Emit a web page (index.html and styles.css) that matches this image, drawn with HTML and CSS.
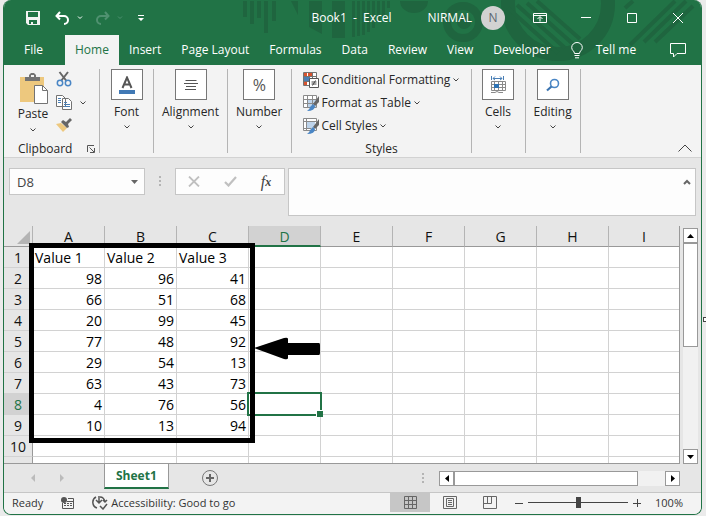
FILE: index.html
```html
<!DOCTYPE html>
<html lang="en">
<head>
    <meta charset="UTF-8">
    <title>Book1 - Excel</title>
    <link rel="stylesheet" href="styles.css">
</head>
<body>
    <div class="window">
        <header class="top">
            <svg class="pattern" width="460" height="65" viewBox="240 0 460 65">
                <path d="M243 1h4v16h-4zM250 1h4v23h-4zM257 1h4v17h-4zM264 1h4v32h-4zM272 1h4v20h-4zM291 1h7v14zM309 1h13v33l-13-7zM332 1h13v37h-13zM352 1h3v36h-3zM357 1h3v35h-3zM362 1h3v34h-3zM367 1h3v31h-3zM372 1h3v27h-3zM377 1h3v21h-3zM382 1h3v15h-3zM387 1h3v7h-3zM400 1h28a14 12 0 0 1-28 0z"/>
                <circle class="ring" cx="463" cy="22" r="16" stroke-width="8"/>
                <circle cx="464" cy="22" r="7"/>
                <circle class="ring" cx="558" cy="4" r="50" stroke-width="14"/>
                <path class="ring" d="M508 8l50 45M517 5l48 43M527 3l46 41M537 1l43 38M630 45l45-44M644 42l42-41M625 8l8-7M655 42l38-36" stroke-width="4"/>
            </svg>
            <div class="titlebar">
                <button class="quick save" aria-label="Save">
                    <svg width="14" height="14" viewBox="0 0 14 14"><path fill="#f3f3f3" fill-rule="evenodd" d="M0 0h14v14H2l-2-2zM2 1v5h10V1zM3 9v4h2v-2h2v2h4V9z"/></svg>
                </button>
                <button class="quick undo" aria-label="Undo">
                    <svg width="15" height="14" viewBox="0 0 15 14"><path class="white thick" d="M5 1L1.500 5L5 8.500M2 5h7a4 4 0 0 1 0 8"/></svg>
                </button>
                <button class="quick arrow" aria-label="Undo list"><svg width="6" height="4" viewBox="0 0 6 4"><path class="white" d="M1 .5l2 2l2-2"/></svg></button>
                <button class="quick redo" aria-label="Redo">
                    <svg width="15" height="14" viewBox="0 0 15 14"><path class="faded thick" d="M10 1l3.500 4L10 8.500M13 5H6a4 4 0 0 0 0 8"/></svg>
                </button>
                <button class="quick arrow" aria-label="Redo list"><svg width="6" height="4" viewBox="0 0 6 4"><path class="faded" d="M1 .5l2 2l2-2"/></svg></button>
                <button class="quick custom" aria-label="Customize toolbar">
                    <svg width="6" height="6" viewBox="0 0 6 6"><path fill="#fff" d="M0 0h6v1H0zM0 3h6L3 6z"/></svg>
                </button>
                <span class="book">Book1&nbsp; -&nbsp; Excel</span>
                <span class="user">NIRMAL</span>
                <span class="avatar">N</span>
                <button class="win" aria-label="Ribbon display options"><svg width="14" height="12" viewBox="0 0 14 12"><path class="white" d="M.5 1.500h13v9H.5zM.5 3.500h13M7 9.500V5M4.500 7L7 4.500L9.500 7"/></svg></button>
                <button class="win" aria-label="Minimize"><svg width="10" height="12" viewBox="0 0 10 12"><path class="white" d="M0 5.500h10"/></svg></button>
                <button class="win" aria-label="Maximize"><svg width="10" height="12" viewBox="0 0 10 12"><path class="white" d="M.5 1.500h9v9h-9z"/></svg></button>
                <button class="win" aria-label="Close"><svg width="10" height="12" viewBox="0 0 10 12"><path class="white" d="M0 1l10 10M10 1L0 11"/></svg></button>
            </div>
            <nav class="tabs">
                <button class="file">File</button>
                <button class="active">Home</button>
                <button>Insert</button>
                <button>Page Layout</button>
                <button>Formulas</button>
                <button>Data</button>
                <button>Review</button>
                <button>View</button>
                <button>Developer</button>
                <button class="tell">
                    <svg width="12" height="17" viewBox="0 0 12 17"><path class="white" d="M3.500 11.500C3.500 9 .7 8.500.7 5.500a5.300 5 0 0 1 10.600 0C11.300 8.500 8.500 9 8.500 11.500zM3.500 13.500h5M4 15.800h4"/></svg>
                    Tell me
                </button>
                <button class="comment" aria-label="Comments"><svg width="16" height="15" viewBox="0 0 16 15"><path class="white" d="M.5.5h15v10H7l-3.500 3.500v-3.500h-3z"/></svg></button>
            </nav>
        </header>

        <section class="ribbon">
            <div class="group clipboard">
                <div class="tools">
                    <button class="paste">
                        <svg width="29" height="31" viewBox="0 0 29 31">
                            <path fill="#edc87e" d="M1 4h24v25H1z"/>
                            <path fill="#737373" d="M6 8V4h4V2l2-2h3l2 2v2h4v4zM12 2v2h3V2z" fill-rule="evenodd"/>
                            <path fill="#fff" stroke="#737373" d="M15.500 12.500h8l5 5v13h-13z"/>
                            <path fill="none" stroke="#737373" d="M23.500 12.500v5h5"/>
                        </svg>
                        <span>Paste</span>
                        <svg class="down" width="6" height="4" viewBox="0 0 6 4"><path d="M.5.5L3 3L5.500.5"/></svg>
                    </button>
                    <div class="small">
                        <button aria-label="Cut"><svg width="16" height="16" viewBox="0 0 16 16"><path fill="none" stroke="#666" stroke-width="2" d="M3.500 1l7 9M12 1L5 10"/><g fill="none" stroke="#4a86c5" stroke-width="1.500"><circle cx="4" cy="12" r="2.700"/><circle cx="12" cy="12" r="2.700"/></g></svg></button>
                        <button aria-label="Copy"><svg width="16" height="15" viewBox="0 0 16 15"><path fill="#fff" stroke="#737373" d="M.5.5h6l3 3v8h-9zM6.500 3.500h6l3 3v8h-9z"/><path fill="none" stroke="#4a7fb5" d="M2 3.500h3M2 5.500h3M2 7.500h3M8 7.500h3M8 9.500h6M8 11.500h6"/></svg><svg class="down" width="6" height="4" viewBox="0 0 6 4"><path d="M.5.5L3 3L5.500.5"/></svg></button>
                        <button aria-label="Format Painter"><svg width="16" height="14" viewBox="0 0 16 14"><path fill="#edc87e" d="M0 6l5-1l6 5l-4 4z"/><path fill="#666" d="M5 4l2-2l3 2l4-4l2 2l-4 4l1 3l-2 1z"/></svg></button>
                    </div>
                </div>
                <div class="caption">Clipboard<button class="launch" aria-label="Clipboard settings"><svg width="8" height="8" viewBox="0 0 8 8"><path fill="none" stroke="#555" d="M.5 7V.5H7M2.500 2.500l4.500 4.500M7.500 3v4.500H3"/></svg></button></div>
            </div>
            <div class="group">
                <button class="big"><span class="box"><svg width="16" height="18" viewBox="0 0 16 18"><path fill="none" stroke="#555" stroke-width="2" d="M3.500 12L8 1.500L12.500 12M5 8.500h6"/><path fill="#4179b5" d="M0 14h16v4H0z"/></svg></span>Font<svg class="down" width="6" height="4" viewBox="0 0 6 4"><path d="M.5.5L3 3L5.500.5"/></svg></button>
            </div>
            <div class="group">
                <button class="big"><span class="box"><svg width="14" height="12" viewBox="0 0 14 12"><path fill="none" stroke="#555" d="M1.500 1.500h11M0 4.500h14M2 7.500h10M1 10.500h11"/></svg></span>Alignment<svg class="down" width="6" height="4" viewBox="0 0 6 4"><path d="M.5.5L3 3L5.500.5"/></svg></button>
            </div>
            <div class="group">
                <button class="big"><span class="box percent">%</span>Number<svg class="down" width="6" height="4" viewBox="0 0 6 4"><path d="M.5.5L3 3L5.500.5"/></svg></button>
            </div>
            <div class="group styles">
                <div class="list">
                    <button><svg width="16" height="16" viewBox="0 0 16 16"><path fill="#fff" stroke="#737373" d="M.5.500h13v13H.5zM.5 4.500h13M.5 9.500h13M9.500.5v13"/><path fill="#d8532f" d="M1 1h3v3H1zM5 1h4v3H5zM1 10h3v3H1z"/><path fill="#4a7fb5" d="M1 5h6v4H1z"/><path fill="#fff" stroke="#555" d="M6.500 6.500h9v9h-9z"/><path fill="none" stroke="#444" d="M8.500 10h5M8.500 12h5M12.500 8.500l-3 5"/></svg>Conditional Formatting<svg class="down" width="6" height="4" viewBox="0 0 6 4"><path d="M.5.5L3 3L5.500.5"/></svg></button>
                    <button><svg width="16" height="16" viewBox="0 0 16 16"><path fill="#fff" stroke="#8a8a8a" d="M.5.500h13v12H.5z"/><path fill="#bdd3ea" d="M5 4h8v8H5z"/><path fill="none" stroke="#8a8a8a" d="M.5 4.500h13M.5 8.500h13M4.500.5v12M9.500.5v12"/><path fill="#666" d="M16 1v6l-4 4l-2-2z"/><path fill="#4a86c5" d="M10 9l2 2q0 5-8 5q3-2 3-4z"/></svg>Format as Table<svg class="down" width="6" height="4" viewBox="0 0 6 4"><path d="M.5.5L3 3L5.500.5"/></svg></button>
                    <button><svg width="16" height="16" viewBox="0 0 16 16"><path fill="#fff" stroke="#8a8a8a" d="M.5.500h13v12H.5z"/><path fill="#bdd3ea" d="M3 4h9v6H3z"/><path fill="none" stroke="#8a8a8a" d="M.5 3.500h13M.5 10.500h8M3.500.5v12"/><path fill="#666" d="M16 1v6l-4 4l-2-2z"/><path fill="#4a86c5" d="M10 9l2 2q0 5-8 5q3-2 3-4z"/></svg>Cell Styles<svg class="down" width="6" height="4" viewBox="0 0 6 4"><path d="M.5.5L3 3L5.500.5"/></svg></button>
                </div>
                <div class="caption">Styles</div>
            </div>
            <div class="group">
                <button class="big"><span class="box"><svg width="16" height="17" viewBox="0 0 16 17"><path fill="none" stroke="#4a7fb5" d="M1.500 0v4M13.500 0v4M3 2.500h9M5 .5l-2 2l2 1.500M10 .5l2 2l-2 1.500"/><path fill="#fff" stroke="#8a8a8a" d="M1.500 5.500h14v9h-14zM1.500 8.500h14M1.500 11.500h14M4.500 5.500v9M8.500 5.500v9M12.500 5.500v9M1 16.500h4l2-1l2 1h4"/><path fill="#2f74b5" d="M4 8h5v4H4z"/></svg></span>Cells<svg class="down" width="6" height="4" viewBox="0 0 6 4"><path d="M.5.5L3 3L5.500.5"/></svg></button>
            </div>
            <div class="group">
                <button class="big"><span class="box"><svg width="14" height="14" viewBox="0 0 14 14"><circle fill="none" stroke="#4a86c5" stroke-width="1.600" cx="8.500" cy="5.500" r="4"/><path stroke="#3b74b0" stroke-width="2.200" d="M5.500 8.500L1 12.500"/></svg></span>Editing<svg class="down" width="6" height="4" viewBox="0 0 6 4"><path d="M.5.5L3 3L5.500.5"/></svg></button>
            </div>
            <button class="collapse" aria-label="Collapse ribbon"><svg width="14" height="8" viewBox="0 0 14 8"><path fill="none" stroke="#444" d="M.5 7.500L7 1l6.500 6.500"/></svg></button>
        </section>

        <section class="formula">
            <div class="name">
                <input type="text" value="D8" aria-label="Name box">
                <button aria-label="Names"><svg width="7" height="4" viewBox="0 0 7 4"><path fill="#666" d="M0 0h7L3.500 4z"/></svg></button>
            </div>
            <span class="dots"></span>
            <div class="fx">
                <button aria-label="Cancel"><svg width="12" height="11" viewBox="0 0 12 11"><path fill="none" stroke="#c0c0c0" stroke-width="1.800" d="M1 .5l10 10M11 .5L1 10.500"/></svg></button>
                <button aria-label="Enter"><svg width="13" height="11" viewBox="0 0 13 11"><path fill="none" stroke="#c0c0c0" stroke-width="2.200" d="M1 6l3.500 3.500L12 1"/></svg></button>
                <button class="fn" aria-label="Insert function">f<sub>x</sub></button>
            </div>
            <div class="entry">
                <textarea aria-label="Formula bar"></textarea>
                <button aria-label="Collapse formula bar"><svg width="8" height="6" viewBox="0 0 8 6"><path fill="none" stroke="#666" stroke-width="2" d="M1 5l3-3l3 3"/></svg></button>
            </div>
        </section>

        <main class="sheet">
            <div class="grid">
                <table>
                    <colgroup><col class="num"><col><col><col><col><col><col><col><col><col class="last"></colgroup>
                    <thead>
                        <tr><th class="corner"><svg width="13" height="13" viewBox="0 0 13 13"><path fill="#b4b4b4" d="M13 0v13H0z"/></svg></th><th>A</th><th>B</th><th>C</th><th class="on">D</th><th>E</th><th>F</th><th>G</th><th>H</th><th>I</th></tr>
                    </thead>
                    <tbody>
                        <tr><th>1</th><td class="text">Value 1</td><td class="text">Value 2</td><td class="text">Value 3</td><td></td><td></td><td></td><td></td><td></td><td></td></tr>
                        <tr><th>2</th><td>98</td><td>96</td><td>41</td><td></td><td></td><td></td><td></td><td></td><td></td></tr>
                        <tr><th>3</th><td>66</td><td>51</td><td>68</td><td></td><td></td><td></td><td></td><td></td><td></td></tr>
                        <tr><th>4</th><td>20</td><td>99</td><td>45</td><td></td><td></td><td></td><td></td><td></td><td></td></tr>
                        <tr><th>5</th><td>77</td><td>48</td><td>92</td><td></td><td></td><td></td><td></td><td></td><td></td></tr>
                        <tr><th>6</th><td>29</td><td>54</td><td>13</td><td></td><td></td><td></td><td></td><td></td><td></td></tr>
                        <tr><th>7</th><td>63</td><td>43</td><td>73</td><td></td><td></td><td></td><td></td><td></td><td></td></tr>
                        <tr><th class="on">8</th><td>4</td><td>76</td><td>56</td><td class="selected"></td><td></td><td></td><td></td><td></td><td></td></tr>
                        <tr><th>9</th><td>10</td><td>13</td><td>94</td><td></td><td></td><td></td><td></td><td></td><td></td></tr>
                        <tr><th>10</th><td></td><td></td><td></td><td></td><td></td><td></td><td></td><td></td><td></td></tr>
                        <tr class="cut"><th></th><td></td><td></td><td></td><td></td><td></td><td></td><td></td><td></td><td></td></tr>
                    </tbody>
                </table>
                <div class="frame"></div>
                <svg class="pointer" width="68" height="24" viewBox="0 0 68 24"><path d="M1 11L31 1q4-1 4 1v4h31q1 0 1 2v8q0 2-1 2H35v3q0 2-4 1z"/></svg>
            </div>
            <div class="vscroll">
                <button aria-label="Scroll up"><svg width="7" height="4" viewBox="0 0 7 4"><path d="M0 4h7L3.500 0z"/></svg></button>
                <span class="thumb"></span>
                <button aria-label="Scroll down"><svg width="7" height="4" viewBox="0 0 7 4"><path d="M0 0h7L3.500 4z"/></svg></button>
            </div>
        </main>

        <div class="sheetbar">
            <button class="step" aria-label="Previous sheet"><svg width="4" height="8" viewBox="0 0 4 8"><path fill="#bbb" d="M4 0v8L0 4z"/></svg></button>
            <button class="step" aria-label="Next sheet"><svg width="4" height="8" viewBox="0 0 4 8"><path fill="#bbb" d="M0 0v8l4-4z"/></svg></button>
            <button class="sheettab">Sheet1</button>
            <button class="add" aria-label="New sheet"><svg width="16" height="16" viewBox="0 0 16 16"><circle fill="none" stroke="#777" cx="8" cy="8" r="7.500"/><path stroke="#666" stroke-width="2" d="M4 8h8M8 4v8"/></svg></button>
            <span class="dots"></span>
            <div class="hscroll">
                <button aria-label="Scroll left"><svg width="4" height="7" viewBox="0 0 4 7"><path d="M4 0v7L0 3.500z"/></svg></button>
                <span class="thumb"></span>
                <button aria-label="Scroll right"><svg width="4" height="7" viewBox="0 0 4 7"><path d="M0 0v7l4-3.500z"/></svg></button>
            </div>
        </div>

        <footer class="status">
            <span class="ready">Ready</span>
            <svg class="macro" width="13" height="12" viewBox="0 0 13 12"><path fill="none" stroke="#555" d="M1.500 6v5.500h11v-10H7M6 4.500h6"/><path fill="#555" d="M3 6h2v1H3zM6 6h2v1H6zM9 6h2v1H9zM3 8h2v1H3zM6 8h2v1H6zM9 8h2v1H9z"/><circle fill="#555" cx="3" cy="3" r="3"/></svg>
            <svg class="access" width="16" height="14" viewBox="0 0 16 14"><path fill="none" stroke="#555" stroke-width="1.500" d="M4 1a6 6 0 0 0 1 11M7 0v6M4 4l3 3l3-3M8 1q4 0 5 5M11 4l2 2l2-2M8 10l3 3l4-5"/></svg>
            <span>Accessibility: Good to go</span>
            <div class="views">
                <button class="active" aria-label="Normal"><svg width="13" height="13" viewBox="0 0 13 13"><path fill="none" stroke="#666" d="M.5.500h12v12H.5zM.5 4.500h12M.5 8.500h12M4.500.5v12M8.500.5v12"/></svg></button>
                <button aria-label="Page Layout"><svg width="14" height="13" viewBox="0 0 14 13"><path fill="none" stroke="#666" d="M.5.500h13v12H.5zM3.500 2.500h7v8h-7zM5 4.500h4M5 6.500h4M5 8.500h4"/></svg></button>
                <button aria-label="Page Break Preview"><svg width="14" height="13" viewBox="0 0 14 13"><path fill="none" stroke="#666" d="M.5.500h13v12H.5zM.5 7.500h8V.5M4.500.5v7"/></svg></button>
            </div>
            <button class="zoom" aria-label="Zoom out"><svg width="8" height="8" viewBox="0 0 8 8"><path stroke="#444" d="M0 4.500h8"/></svg></button>
            <input class="slider" type="range" min="0" max="100" value="50" aria-label="Zoom">
            <button class="zoom" aria-label="Zoom in"><svg width="8" height="8" viewBox="0 0 8 8"><path stroke="#444" d="M0 4.500h8M4.500 0v8"/></svg></button>
            <button class="level">100%</button>
        </footer>
    </div>
    <span class="handle"></span>
</body>
</html>
```

FILE: styles.css
```css
*{
    box-sizing:border-box;
}
body{
    position:relative;
    margin:0;
    overflow:hidden;
    background:#ebebeb;
    font-family:"Open Sans","Noto Sans",sans-serif;
    font-size:12px;
    line-height:16px;
    color:#262626;
}
button,input,textarea{
    font:inherit;
    color:inherit;
    margin:0;
    padding:0;
    border:none;
    background:none;
}
button{
    display:flex;
    align-items:center;
    justify-content:center;
    white-space:nowrap;
}
svg{
    display:block;
    flex:none;
}
.window{
    margin:0 4px 2px 3px;
    border:1px solid #217346;
    border-top:none;
    border-radius:8px;
    background:#e6e6e6;
    overflow:hidden;
}
.white,.faded{
    fill:none;
    stroke:#fff;
}
.faded{
    stroke:#4f9170;
}
.thick{
    stroke-width:2;
}
.down{
    fill:none;
    stroke:#444;
}

/* title bar and tabs */
.top{
    position:relative;
    background:#217346;
    color:#fff;
}
.pattern{
    position:absolute;
    top:0;
    right:1px;
    fill:#1f653f;
}
.ring{
    fill:none;
    stroke:#1f653f;
}
.titlebar{
    position:relative;
    display:flex;
    align-items:center;
    height:35px;
    padding-left:22px;
}
.undo{
    margin-left:15px;
}
.arrow{
    margin-left:7px;
}
.redo{
    margin-left:12px;
}
.custom{
    margin-left:15px;
}
.book{
    margin-left:auto;
    margin-right:36px;
}
.avatar{
    width:24px;
    height:24px;
    margin:0 12px 0 9px;
    border-radius:50%;
    background:#d2d2d2;
    color:#5c6670;
    line-height:24px;
    text-align:center;
}
.win{
    width:46px;
    height:32px;
}
.tabs{
    position:relative;
    display:flex;
    height:30px;
    padding-left:10px;
}
.tabs button{
    padding:0 10px;
}
.tabs .file{
    margin-right:12px;
}
.tabs .active{
    background:#f3f3f3;
    color:#217346;
}
.tabs .tell{
    gap:13px;
}
.tabs .comment{
    margin-left:auto;
    padding-right:15px;
}

/* ribbon */
.ribbon{
    display:flex;
    height:93px;
    padding:4px 0;
    border-bottom:1px solid #d2d2d2;
    background:#f3f3f3;
}
.group{
    display:flex;
    flex-direction:column;
    padding:0 8px;
    border-right:1px solid #b4b4b4;
}
.clipboard{
    width:96px;
    padding:0 2px 0 14px;
}
.tools{
    display:flex;
    flex:1;
    gap:8px;
}
.paste{
    flex-direction:column;
    justify-content:flex-start;
    width:30px;
    padding-top:4px;
    gap:2px;
}
.paste .down{
    margin-top:4px;
}
.small{
    display:flex;
    flex-direction:column;
    gap:8px;
    padding-top:2px;
}
.small button{
    justify-content:flex-start;
    gap:8px;
}
.caption{
    display:flex;
    justify-content:center;
    margin-bottom:-4px;
}
.clipboard .caption{
    justify-content:space-between;
}
.launch{
    width:12px;
}
.big{
    flex-direction:column;
    min-width:37px;
}
.box{
    display:flex;
    align-items:center;
    justify-content:center;
    width:32px;
    height:31px;
    margin-bottom:4px;
    border:1px solid #777;
    background:#fff;
}
.percent{
    font-size:16px;
    color:#555;
}
.big .down{
    margin-top:5px;
}
.styles{
    width:180px;
    padding:0 0 0 11px;
}
.list{
    display:flex;
    flex:1;
    flex-direction:column;
    align-items:flex-start;
    gap:7px;
    padding-top:3px;
}
.list button{
    gap:3px;
}
.styles .caption{
    padding-right:10px;
}
.collapse{
    align-self:flex-end;
    width:32px;
    height:10px;
    margin-left:auto;
}

/* formula bar */
.formula{
    display:flex;
    align-items:flex-start;
    padding:10px 5px;
}
.name,.fx,.entry{
    display:flex;
    border:1px solid #c6c6c6;
    background:#fdfdfd;
}
.name{
    width:136px;
    height:27px;
}
.name input{
    flex:1;
    width:0;
    padding-left:7px;
    font-size:13px;
    color:#444;
}
.name button{
    width:20px;
}
.dots{
    width:2px;
    height:10px;
    background:repeating-linear-gradient(#b4b4b4 0 2px,transparent 2px 4px);
}
.formula .dots{
    margin:8px 14px;
}
.fx{
    width:110px;
    height:27px;
}
.fx button{
    flex:1;
}
.fn{
    font-family:"Liberation Serif",serif;
    font-size:16px;
    font-style:italic;
    color:#444;
}
.fn sub{
    font-size:12px;
    font-weight:bold;
}
.entry{
    flex:1;
    height:48px;
    margin-left:3px;
}
.entry textarea{
    flex:1;
    resize:none;
}
.entry button{
    width:16px;
    height:26px;
}

/* cells */
.sheet{
    display:flex;
    padding-right:3px;
}
.grid{
    position:relative;
    flex:1;
    border-right:1px solid #999;
    border-bottom:1px solid #999;
}
table{
    width:100%;
    table-layout:fixed;
    border-collapse:separate;
    border-spacing:0;
    font-size:14px;
    line-height:18px;
}
col{
    width:72px;
}
.num{
    width:29px;
}
.last{
    width:auto;
}
th,td{
    height:21px;
    padding:2px 0 0;
    border-right:1px solid #d2d2d2;
    border-bottom:1px solid #d2d2d2;
}
th{
    background:#e6e6e6;
    font-weight:normal;
    color:#111;
}
thead th{
    border-right-color:#b4b4b4;
    border-bottom-color:#999;
}
tbody th{
    border-right-color:#999;
}
td{
    padding:2px 2px 0;
    background:#fff;
    text-align:right;
    color:#000;
}
tr > :last-child{
    border-right:none;
}
.text{
    text-align:left;
}
.corner svg{
    margin:0 2px 0 auto;
}
.on{
    background:#d2d2d2;
    color:#217346;
}
thead .on{
    border-bottom:2px solid #217346;
    line-height:17px;
}
tbody .on{
    border-right-color:#217346;
}
.cut > *{
    height:6px;
    border-bottom:none;
}
.selected{
    position:relative;
}
.selected::before{
    content:"";
    position:absolute;
    top:-2px;
    right:-2px;
    bottom:-2px;
    left:-2px;
    border:2px solid #217346;
}
.selected::after{
    content:"";
    position:absolute;
    right:-3px;
    bottom:-3px;
    width:6px;
    height:6px;
    border:1px solid #fff;
    border-width:1px 0 0 1px;
    background:#217346;
}
.frame{
    position:absolute;
    top:17px;
    left:25px;
    width:226px;
    height:200px;
    border:5px solid #000;
}
.pointer{
    position:absolute;
    top:111px;
    left:249px;
}

/* scroll bars */
.vscroll{
    display:flex;
    flex-direction:column;
    width:15px;
    margin:2px 0 0 3px;
    background:#f1f1f1;
}
.vscroll button,.hscroll button,.thumb{
    border:1px solid #999;
    background:#fff;
}
.vscroll button{
    height:15px;
}
.vscroll .thumb{
    height:104px;
}
.vscroll button:last-child,.hscroll button:last-child{
    margin-top:auto;
}
.sheetbar{
    display:flex;
    align-items:center;
    height:28px;
    padding-right:21px;
}
.step{
    width:29px;
}
.step:first-child{
    margin-left:14px;
}
.sheettab{
    align-self:flex-start;
    height:25px;
    margin:0 33px 0 28px;
    padding:0 11px;
    border-right:1px solid #999;
    border-left:1px solid #999;
    border-bottom:2px solid #217346;
    background:#fff;
    font-weight:bold;
    color:#217346;
}
.sheetbar .dots{
    margin:0 15px 0 auto;
}
.hscroll{
    display:flex;
    width:241px;
    height:15px;
    background:#f1f1f1;
}
.hscroll button{
    width:15px;
}
.hscroll .thumb{
    width:184px;
}
.hscroll button:last-child{
    margin:0 0 0 auto;
}

/* status bar */
.status{
    display:flex;
    align-items:center;
    height:22px;
    padding:0 18px 2px 8px;
    border-top:1px solid #c6c6c6;
    background:#f3f3f3;
    font-size:11px;
    color:#333;
}
.macro{
    margin:0 18px;
}
.access{
    margin-right:3px;
}
.views{
    display:flex;
    margin:0 5px 0 auto;
}
.views button{
    width:40px;
    height:19px;
}
.views .active{
    background:#c6c6c6;
}
.slider{
    appearance:none;
    width:100px;
    height:12px;
    margin:0 5px;
    background:linear-gradient(#444,#444) center/100% 1px no-repeat;
}
.slider::-webkit-slider-thumb{
    appearance:none;
    width:5px;
    height:11px;
    background:#444;
}
.level{
    width:42px;
    justify-content:flex-end;
}
.handle{
    position:absolute;
    top:317px;
    right:-3px;
    width:6px;
    height:5px;
    border:1px solid #444;
    background:#fff;
}
```
